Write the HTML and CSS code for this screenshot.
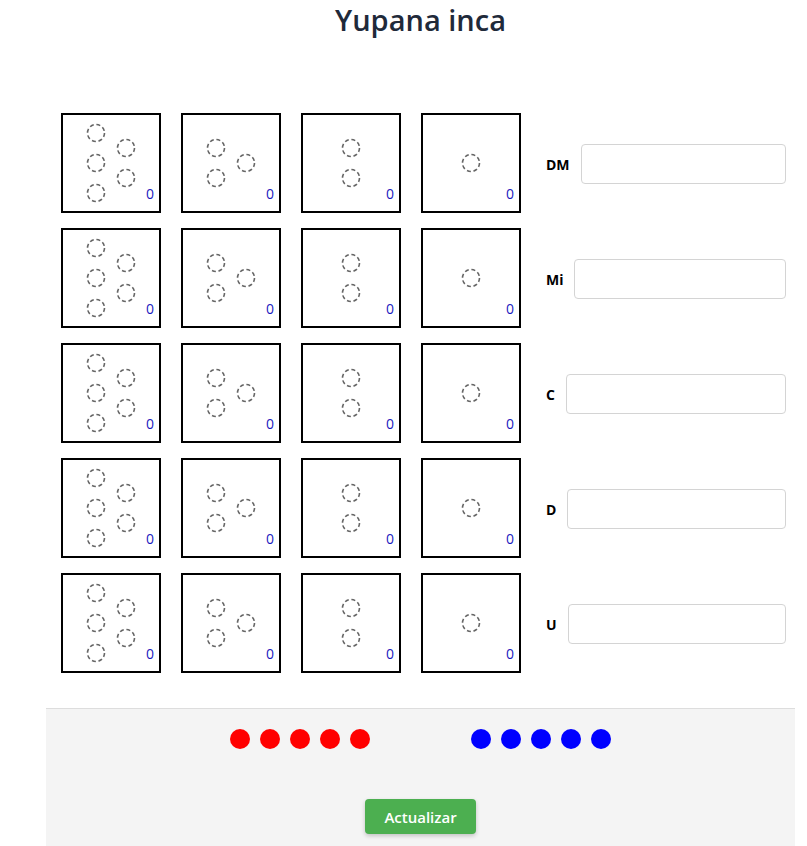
FILE: index.html
```html
<!DOCTYPE html>
<html lang="es">
<head>
    <meta charset="UTF-8">
    <meta name="viewport" content="width=device-width, initial-scale=1.0">
    <title>Yupana inca</title>
    <link rel="stylesheet" href="styles.css">
</head>
<body>
    <div class="page">
        <h1>Yupana inca</h1>

        <div id="tablero" class="board"></div>

        <div class="footer">
            <div class="dots">
                <div class="dot-group">
                    <span class="dot red"></span>
                    <span class="dot red"></span>
                    <span class="dot red"></span>
                    <span class="dot red"></span>
                    <span class="dot red"></span>
                </div>
                <div class="dot-group">
                    <span class="dot blue"></span>
                    <span class="dot blue"></span>
                    <span class="dot blue"></span>
                    <span class="dot blue"></span>
                    <span class="dot blue"></span>
                </div>
            </div>
            <button class="btn" onclick="actualizar()">Actualizar</button>
        </div>
    </div>

    <script>
        // posiciones de los huecos en cada casilla (5, 3, 2 y 1)
        const huecos = [
            [[33, 18], [63, 33], [33, 48], [63, 63], [33, 78]],
            [[33, 33], [63, 48], [33, 63]],
            [[48, 33], [48, 63]],
            [[48, 48]]
        ];
        const filas = ['DM', 'Mi', 'C', 'D', 'U'];

        function casilla(puntos) {
            let circulos = '';
            puntos.forEach(function (p) {
                circulos += `<circle cx="${p[0]}" cy="${p[1]}" r="8.5" />`;
            });
            return `
                <div class="cell">
                    <svg viewBox="0 0 96 96" width="96" height="96">${circulos}</svg>
                    <span class="count">0</span>
                </div>`;
        }

        function dibujar() {
            const tablero = document.getElementById('tablero');
            let html = '';
            filas.forEach(function (nombre) {
                html += '<div class="row">';
                huecos.forEach(function (h) {
                    html += casilla(h);
                });
                html += `
                    <div class="field">
                        <label for="in-${nombre}">${nombre}</label>
                        <input type="text" id="in-${nombre}">
                    </div>
                </div>`;
            });
            tablero.innerHTML = html;
        }

        function actualizar() {
            filas.forEach(function (nombre) {
                document.getElementById('in-' + nombre).value = '';
            });
        }

        dibujar();
    </script>
</body>
</html>
```

FILE: styles.css
```css
body {
    margin: 0;
    font-family: "Open Sans", "Noto Sans", sans-serif;
    background-color: #fff;
}
.page {
    width: 749px;
    margin-left: 46px;
}
h1 {
    margin: 0 0 74px;
    font-size: 29px;
    line-height: 39px;
    font-weight: 600;
    text-align: center;
    color: #1f2a3a;
}
.board {
    display: flex;
    flex-direction: column;
    gap: 15px;
}
.row {
    display: flex;
    align-items: center;
    gap: 20px;
    padding-left: 15px;
}
.cell {
    position: relative;
    width: 96px;
    height: 96px;
    border: 2px solid #000;
    background-color: #fff;
}
.cell svg {
    display: block;
}
.cell circle {
    fill: none;
    stroke: #666;
    stroke-width: 1.6;
    stroke-dasharray: 4 2.7;
}
.count {
    position: absolute;
    right: 5px;
    bottom: 9px;
    font-size: 14px;
    line-height: 16px;
    color: #1a1ac0;
}
.field {
    flex: 1;
    display: flex;
    align-items: center;
    gap: 11px;
    margin: 2px 0 0 5px;
    padding-right: 9px;
}
.field label {
    font-size: 14px;
    font-weight: 700;
    color: #000;
}
.field input {
    flex: 1;
    min-width: 0;
    height: 40px;
    box-sizing: border-box;
    border: 1px solid #d4d4d4;
    border-radius: 4px;
    padding: 6px 10px;
    font-size: 14px;
}
.footer {
    margin-top: 35px;
    border-top: 1px solid #ddd;
    background-color: #f4f4f4;
    padding: 20px 0 30px;
    display: flex;
    flex-direction: column;
    align-items: center;
    gap: 50px;
}
.dots {
    display: flex;
    gap: 101px;
}
.dot-group {
    display: flex;
    gap: 10px;
}
.dot {
    width: 20px;
    height: 20px;
    border-radius: 50%;
}
.red {
    background-color: #f00;
}
.blue {
    background-color: #00f;
}
.btn {
    background-color: #4CAF50;
    color: white;
    border: none;
    padding: 0 19px;
    height: 35px;
    border-radius: 4px;
    font-family: "Open Sans", sans-serif;
    font-size: 15px;
    font-weight: 600;
    cursor: pointer;
    box-shadow: 0 2px 4px rgba(0, 0, 0, 0.2);
}
.btn:hover {
    background-color: #45a049;
}
```
